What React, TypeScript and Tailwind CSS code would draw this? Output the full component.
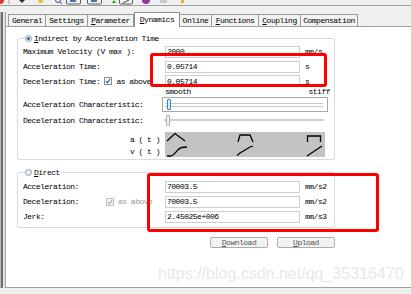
import React from 'react'

const mono = "font-['Liberation_Mono',monospace] text-[8px] tracking-[-0.5px] leading-[9px] text-black"

function Field({ value, unit }: { value: string; unit: string }) {
  return (
    <div className="flex items-center">
      <div className="w-[135px] h-[12px] border border-[#cfcfcf] bg-white flex items-center pl-[1px]">{value}</div>
      <span className="ml-[5px]">{unit}</span>
    </div>
  )
}

function Check({ disabled }: { disabled?: boolean }) {
  return (
    <span
      className={
        disabled
          ? 'w-[8px] h-[8px] border border-[#c4c4c4] bg-[#f4f4f4] flex items-center justify-center'
          : 'w-[8px] h-[8px] border border-[#8e8f8f] bg-white flex items-center justify-center'
      }
    >
      <svg width="6" height="6" viewBox="0 0 6 6">
        <path d="M0.8 3.2 L2.4 4.8 L5.2 0.9" fill="none" stroke={disabled ? '#b0b0b0' : '#2a5fb0'} strokeWidth="1.2" />
      </svg>
    </span>
  )
}

function Radio({ on }: { on?: boolean }) {
  return (
    <span className="w-[7px] h-[7px] rounded-full border border-[#8c9aa8] bg-[#eef2f5] flex items-center justify-center">
      {on && <span className="w-[3px] h-[3px] rounded-full bg-[#1f5fbf]" />}
    </span>
  )
}

function Toolbar() {
  return (
    <svg width="411" height="6" className="block">
      <rect x="0" y="0" width="411" height="5" fill="#f0f0f0" />
      <circle cx="0" cy="0" r="4" fill="#d83b2b" />
      <line x1="9" y1="0" x2="9" y2="4" stroke="#9a9a9a" />
      <path d="M19 0 L22 3 L25 0 Z" fill="#303030" />
      <rect x="38" y="0" width="5" height="3" fill="#e8c840" />
      <circle cx="58" cy="0" r="2.5" fill="none" stroke="#405080" />
      <line x1="60" y1="2" x2="62" y2="4" stroke="#405080" />
      <rect x="66.5" y="-2" width="14" height="6" rx="1" fill="none" stroke="#606060" />
      <rect x="70" y="0" width="6" height="2" fill="#5070a0" />
      <rect x="87.5" y="-2" width="14" height="6" rx="1" fill="none" stroke="#606060" />
      <rect x="91" y="0" width="6" height="2" fill="#5070a0" />
      <path d="M112 3 L114 0 L116 3 Z" fill="#30a030" />
      <rect x="119.5" y="-2" width="13" height="6" rx="1" fill="none" stroke="#606060" />
      <line x1="123" y1="3" x2="129" y2="0" stroke="#404040" />
      <circle cx="146" cy="0" r="4" fill="#8a3aa0" />
      <rect x="160" y="0" width="7" height="3" fill="#c8c8c8" />
      <rect x="181" y="0" width="3" height="3" fill="#e0b020" />
      <rect x="0" y="5" width="411" height="1" fill="#a0a0a0" />
    </svg>
  )
}

const tabs = ['General', 'Settings', 'Parameter', 'Dynamics', 'Online', 'Functions', 'Coupling', 'Compensation']
const tabW = [38, 43, 47, 46, 33, 48, 43, 58]

function Tabs() {
  return (
    <div className="flex items-end h-[14px] pl-[2px]">
      {tabs.map((t, i) =>
        t === 'Dynamics' ? (
          <div
            key={t}
            style={{ width: tabW[i] }}
            className="h-[15px] -mb-[1px] relative z-10 bg-white border border-b-0 border-[#8c8c8c] flex items-center justify-center pb-[2px]"
          >
            <span><u>D</u>ynamics</span>
          </div>
        ) : (
          <div
            key={t}
            style={{ width: tabW[i] }}
            className="h-[12px] bg-[#f3f3f3] border border-b-0 border-[#9a9a9a] -ml-[1px] first:ml-0 flex items-center justify-center"
          >
            <span>
              {['Parameter', 'Functions', 'Coupling'].includes(t) ? (
                <>
                  <u>{t[0]}</u>
                  {t.slice(1)}
                </>
              ) : (
                t
              )}
            </span>
          </div>
        )
      )}
    </div>
  )
}

function Curves() {
  return (
    <svg width="160" height="25" className="block">
      <g fill="none" stroke="#000" strokeWidth="1.3">
        <polyline points="2,9 10,1.5 20,9" />
        <path d="M2 24 L5 24 C10 24 12 16 17 15.5 L22 15" />
        <polyline points="73,10 75,3 85,3 88,10" />
        <path d="M72 23.5 L75 21 L85 15 L88 14" />
        <polyline points="142.5,10 142.5,4 155.5,4 155.5,10" />
        <line x1="142" y1="24" x2="157" y2="14" />
      </g>
    </svg>
  )
}

export default function App() {
  return (
    <div className={'w-[411px] h-[294px] bg-[#f0f0f0] overflow-hidden relative ' + mono}>
      <Toolbar />
      <div className="h-[6px]" />
      <div className="flex h-[276px]">
        <div className="w-[6px] flex shrink-0">
          <div className="w-[1px] bg-[#b8b8b8]" />
          <div className="w-[2px] bg-[#707070]" />
          <div className="w-[2px] bg-[#e2e2e2]" />
          <div className="w-[1px] bg-[#a4a4a4]" />
        </div>
        <div className="flex-1 flex flex-col">
          <Tabs />
          <div className="flex-1 bg-white border-t border-b border-[#a0a0a0] pl-[11px]">
            {/* Indirect group */}
            <div className="relative mt-[11px] w-[318px] border border-[#d5dde3] rounded-[2px] pl-[5px] pt-[5px] pb-[2px]">
              <div className="absolute -top-[5px] left-[7px] h-[9px] flex items-center gap-[2px] bg-white pr-[1px]">
                <Radio on />
                <span><u>I</u>ndirect by Acceleration Time</span>
              </div>
              <div className="flex items-center h-[15px]">
                <div className="w-[142px]">Maximum Velocity (V max ):</div>
                <Field value="2000" unit="mm/s" />
              </div>
              <div className="flex items-center h-[15px]">
                <div className="w-[142px]">Acceleration Time:</div>
                <Field value="0.05714" unit="s" />
              </div>
              <div className="flex items-center h-[14px]">
                <div className="w-[142px] flex items-center">
                  <span>Deceleration Time:</span>
                  <span className="ml-[4px]"><Check /></span>
                  <span className="ml-[4px]">as above</span>
                </div>
                <Field value="0.05714" unit="s" />
              </div>
              <div className="flex items-center h-[7px] pl-[142px] w-[307px] justify-between leading-[7px]">
                <span>smooth</span>
                <span>stiff</span>
              </div>
              <div className="flex items-center h-[16px] mt-[1px]">
                <div className="w-[139px]">Acceleration Characteristic:</div>
                <div className="relative w-[166px] h-[15px] border border-[#a8a8a8]">
                  <div className="absolute left-[2px] right-[4px] top-[5px] h-[4px] border-t border-b border-[#c8c8c8]" />
                  <div className="absolute left-[4px] top-[1px] w-[4px] h-[11px] rounded-[1px] border border-[#3c7fb1] bg-[#dcecfc]" />
                </div>
              </div>
              <div className="flex items-center h-[16px]">
                <div className="w-[139px]">Deceleration Characteristic:</div>
                <div className="relative w-[166px] h-[11px]">
                  <div className="absolute left-[2px] right-[4px] top-[4px] h-[2px] border-t border-b border-[#d0d0d0]" />
                  <div className="absolute left-[4px] top-0 w-[4px] h-[11px] rounded-[1px] border border-[#a8a8a8] bg-[#f4f4f4]" />
                </div>
              </div>
              <div className="flex mt-[4px]">
                <div className="w-[142px] pr-[5px] flex flex-col items-end pt-[1px]">
                  <span className="h-[12px] flex items-center">a ( t )</span>
                  <span className="h-[12px] flex items-center">v ( t )</span>
                </div>
                <div className="w-[160px] h-[25px] bg-[#c3c3c3]">
                  <Curves />
                </div>
              </div>
            </div>

            {/* Direct group */}
            <div className="relative mt-[12px] w-[318px] border border-[#d5dde3] rounded-[2px] pl-[5px] pt-[6px] pb-[3px]">
              <div className="absolute -top-[5px] left-[7px] h-[9px] flex items-center gap-[2px] bg-white pr-[1px]">
                <Radio />
                <span><u>D</u>irect</span>
              </div>
              <div className="flex items-center h-[15px]">
                <div className="w-[142px]">Acceleration:</div>
                <Field value="70003.5" unit="mm/s2" />
              </div>
              <div className="flex items-center h-[15px]">
                <div className="w-[142px] flex items-center">
                  <span>Deceleration:</span>
                  <span className="ml-[27px]"><Check disabled /></span>
                  <span className="ml-[4px] text-[#9a9a9a]">as above</span>
                </div>
                <Field value="70003.5" unit="mm/s2" />
              </div>
              <div className="flex items-center h-[15px]">
                <div className="w-[142px]">Jerk:</div>
                <Field value="2.45025e+006" unit="mm/s3" />
              </div>
            </div>

            <div className="flex mt-[9px] pl-[193px] gap-[9px]">
              <div className="w-[58px] h-[11px] border border-[#acacac] rounded-[2px] bg-[#f2f2f2] flex items-center justify-center text-[#555]">
                <span><u>D</u>ownload</span>
              </div>
              <div className="w-[58px] h-[11px] border border-[#acacac] rounded-[2px] bg-[#f2f2f2] flex items-center justify-center text-[#555]">
                <span><u>U</u>pload</span>
              </div>
            </div>
          </div>
        </div>
      </div>

      {/* annotations / watermark */}
      <div className="absolute left-[150px] top-[53px] w-[177px] h-[34px] border-[3px] border-[#ff0000] rounded-[3px]" />
      <div className="absolute left-[147px] top-[173px] w-[232px] h-[59px] border-[3px] border-[#ff0000] rounded-[3px]" />
      <div className="absolute left-[158px] top-[266px] font-['Liberation_Sans',Arial,sans-serif] text-[16px] leading-[16px] tracking-normal text-[#e8e8e8]">
        https://blog.csdn.net/qq_35316470
      </div>
    </div>
  )
}
